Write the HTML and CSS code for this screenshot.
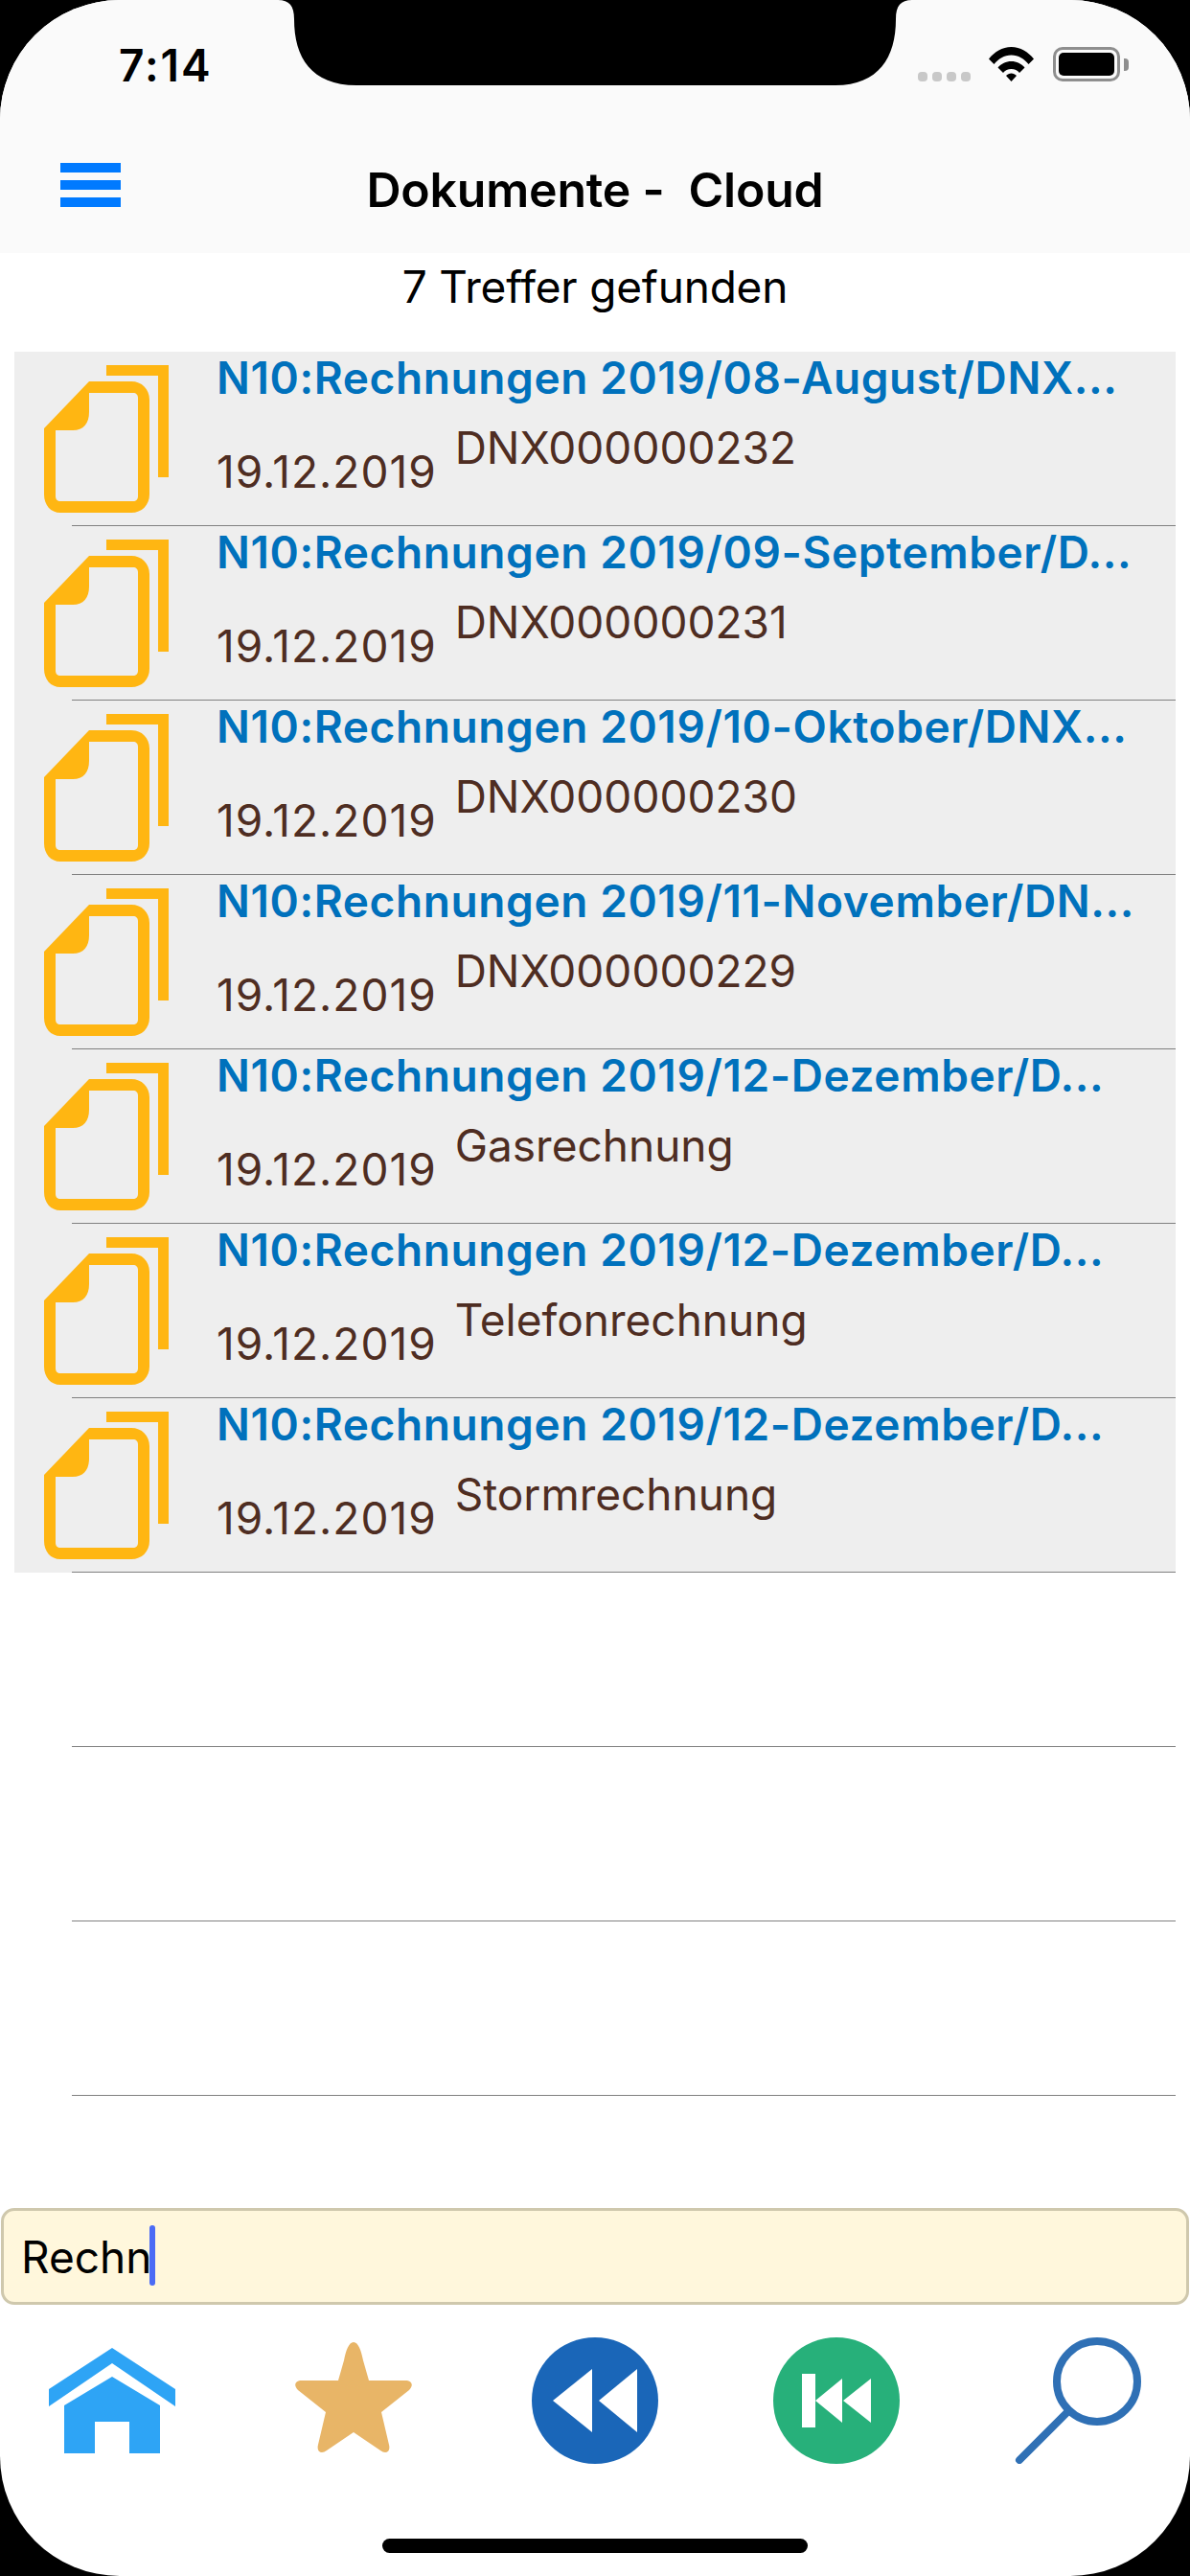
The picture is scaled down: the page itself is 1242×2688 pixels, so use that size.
FILE: index.html
```html
<!DOCTYPE html>
<html lang="de">
<head>
<meta charset="utf-8">
<title>Dokumente - Cloud</title>
<link rel="stylesheet" href="styles.css">
</head>
<body>
<svg class="defs" width="0" height="0" aria-hidden="true">
  <symbol id="doc" viewBox="46 381 132 154">
    <path d="M111 381H176V498H165V392H111Z"/>
    <path fill-rule="evenodd" d="M93 398H137C148 398 156 406 156 417V516C156 527 148 535 137 535H63C53 535 46 527 46 516V447ZM93 410V430C93 442 87 449 76 449H58V518C58 521 60 523 63 523H139C142 523 144 521 144 518V415C144 412 142 410 139 410Z"/>
  </symbol>
</svg>
<div class="screen">
  <header class="head">
    <div class="status">
      <span class="time">7:14</span>
      <div class="status-icons">
        <div class="signal"><i></i><i></i><i></i><i></i></div>
        <svg class="wifi" width="47" height="36" viewBox="0 0 47 36"><path d="M0 12.500C6 5 14 0 23.500 0S41 5 47 12.500L41.500 18C37 12.500 31 8.500 23.500 8.500S10 12.500 5.500 18Z"/><path d="M9.500 21.500C13 17.500 18 15 23.500 15S34 17.500 37.500 21.500L32 27C30 24.500 27 23 23.500 23S17 24.500 15 27Z"/><path d="M18 30C19.500 28.500 21.500 27.500 23.500 27.500S27.500 28.500 29 30L23.500 36Z"/></svg>
        <div class="battery"><span class="battery-fill"></span><span class="battery-nub"></span></div>
      </div>
    </div>
    <nav class="nav">
      <div class="burger"><i></i><i></i><i></i></div>
      <h1 class="title">Dokumente -&nbsp; Cloud</h1>
    </nav>
  </header>
  <div class="count">7 Treffer gefunden</div>
  <ul class="list">
    <li class="row filled">
      <svg class="doc"><use href="#doc"/></svg>
      <div class="body"><div class="path">N10:Rechnungen 2019/08-August/DNX...</div><div class="meta"><span class="date">19.12.2019</span><span class="name">DNX000000232</span></div></div>
    </li>
    <li class="row filled">
      <svg class="doc"><use href="#doc"/></svg>
      <div class="body"><div class="path">N10:Rechnungen 2019/09-September/D...</div><div class="meta"><span class="date">19.12.2019</span><span class="name">DNX000000231</span></div></div>
    </li>
    <li class="row filled">
      <svg class="doc"><use href="#doc"/></svg>
      <div class="body"><div class="path">N10:Rechnungen 2019/10-Oktober/DNX...</div><div class="meta"><span class="date">19.12.2019</span><span class="name">DNX000000230</span></div></div>
    </li>
    <li class="row filled">
      <svg class="doc"><use href="#doc"/></svg>
      <div class="body"><div class="path">N10:Rechnungen 2019/11-November/DN...</div><div class="meta"><span class="date">19.12.2019</span><span class="name">DNX000000229</span></div></div>
    </li>
    <li class="row filled">
      <svg class="doc"><use href="#doc"/></svg>
      <div class="body"><div class="path">N10:Rechnungen 2019/12-Dezember/D...</div><div class="meta"><span class="date">19.12.2019</span><span class="name">Gasrechnung</span></div></div>
    </li>
    <li class="row filled">
      <svg class="doc"><use href="#doc"/></svg>
      <div class="body"><div class="path">N10:Rechnungen 2019/12-Dezember/D...</div><div class="meta"><span class="date">19.12.2019</span><span class="name">Telefonrechnung</span></div></div>
    </li>
    <li class="row filled">
      <svg class="doc"><use href="#doc"/></svg>
      <div class="body"><div class="path">N10:Rechnungen 2019/12-Dezember/D...</div><div class="meta"><span class="date">19.12.2019</span><span class="name">Stormrechnung</span></div></div>
    </li>
    <li class="row"></li>
    <li class="row"></li>
    <li class="row"></li>
  </ul>
  <footer class="foot">
    <div class="search"><span class="query">Rechn</span><span class="caret"></span></div>
    <div class="toolbar">
      <svg class="tool" viewBox="0 0 132 132"><path fill="#2ea4f5" d="M66 11L132 54V72L66 27L0 72V54Z"/><path fill="#2ea4f5" d="M66 41L116 71V121H84V88H48V121H16V71Z"/></svg>
      <svg class="tool" viewBox="0 0 132 132"><path fill="#e8b567" d="M66 5C71 5 74 14 76 24L82 45H120C127 45 129 50 124 55L95 78L103 112C105 120 99 122 94 118L66 99L38 118C33 122 27 120 29 112L37 78L8 55C3 50 5 45 12 45H50L56 24C58 14 61 5 66 5Z"/></svg>
      <svg class="tool" viewBox="0 0 132 132"><circle cx="66" cy="66" r="66" fill="#1a66b8"/><path fill="#fff" d="M22 66L63 33V99Z"/><path fill="#fff" d="M70 66L110 33V99Z"/></svg>
      <svg class="tool" viewBox="0 0 132 132"><circle cx="66" cy="66" r="66" fill="#27b07a"/><path fill="#fff" d="M30 38H44V94H30ZM44 66L72 43V89ZM73 66L102 43V89Z"/></svg>
      <svg class="tool" viewBox="0 0 132 132"><circle cx="86" cy="46" r="42" fill="none" stroke="#2f70b5" stroke-width="8"/><path stroke="#2f70b5" stroke-width="8" stroke-linecap="round" d="M55 78L5 128"/></svg>
    </div>
    <div class="home-bar"></div>
  </footer>
  <svg class="notch" width="662" height="89" viewBox="0 0 662 89"><path d="M0 0C12 0 17 6 17 20C17 60 35 89 82 89H582C627 89 645 60 645 20C645 6 650 0 662 0Z"/></svg>
</div>
</body>
</html>
```

FILE: styles.css
```css
* { box-sizing: border-box; }
html, body { margin: 0; padding: 0; background: #000; }
body { width: 1242px; height: 2688px; overflow: hidden; font-family: Inter, "Liberation Sans", sans-serif; color: #000; }
.defs { position: absolute; }
.screen { position: relative; width: 1242px; height: 2688px; background: #fff; border-radius: 125px; overflow: hidden; display: flex; flex-direction: column; }
.notch { position: absolute; left: 290px; top: 0; fill: #000; }

.head { height: 264px; background: #fafafa; flex: none; }
.status { height: 136px; display: flex; justify-content: space-between; padding: 50px 73px 0 124px; }
.time { font-size: 46px; line-height: 36px; font-weight: 600; letter-spacing: 2px; }
.status-icons { display: flex; align-items: flex-start; margin-top: -1px; }
.signal { display: flex; gap: 5px; margin: 26px 19px 0 0; }
.signal i { width: 10px; height: 10px; border-radius: 4px; background: #c8c8c8; }
.wifi { fill: #000; margin-right: 20px; }
.battery { position: relative; width: 70px; height: 36px; border: 3px solid #8e8e8e; border-radius: 10px; padding: 3px; }
.battery-fill { display: block; height: 100%; background: #000; border-radius: 5px; }
.battery-nub { position: absolute; left: 71px; top: 9px; width: 5px; height: 13px; background: #8e8e8e; border-radius: 0 4px 4px 0; }

.nav { position: relative; display: flex; justify-content: center; padding-top: 22px; }
.burger { position: absolute; left: 63px; top: 34px; width: 63px; display: flex; flex-direction: column; gap: 8px; }
.burger i { height: 10px; background: #007aff; }
.title { margin: 0; font-size: 50px; line-height: 80px; font-weight: 600; letter-spacing: -0.2px; white-space: pre; }

.count { height: 103px; flex: none; text-align: center; font-size: 46px; line-height: 70px; letter-spacing: -0.2px; }

.list { list-style: none; margin: 0; padding: 0; flex: none; }
.row { position: relative; height: 182px; margin: 0 15px; display: flex; }
.row::after { content: ""; position: absolute; left: 60px; right: 0; bottom: 0; height: 1px; background: #808080; }
.filled { background: #eeeeee; }
.doc { flex: none; width: 132px; height: 154px; margin: 14px 48px 0 31px; fill: #ffb612; }
.body { flex: 1; min-width: 0; }
.path { font-size: 46px; line-height: 54px; font-weight: 600; letter-spacing: 0.6px; color: #0071bc; white-space: nowrap; }
.meta { display: flex; gap: 19px; color: #4e2d22; font-size: 46px; line-height: 56px; }
.date { padding-top: 43px; letter-spacing: 1px; }
.name { padding-top: 18px; }

.foot { margin-top: auto; flex: none; }
.search { height: 101px; margin: 0 1px; display: flex; align-items: flex-start; background: #fff7dc; border: 3px solid #cfc8ad; border-radius: 14px; padding: 15px 0 0 18px; }
.query { font-size: 46px; line-height: 58px; padding-top: 4px; }
.caret { width: 6px; height: 63px; border-radius: 3px; background: #4b6bf5; margin-left: -2px; }
.toolbar { display: flex; gap: 120px; padding: 34px 0 0 51px; }
.tool { flex: none; width: 132px; height: 132px; }
.home-bar { width: 444px; height: 15px; margin: 78px auto 24px; background: #000; border-radius: 8px; }
```
